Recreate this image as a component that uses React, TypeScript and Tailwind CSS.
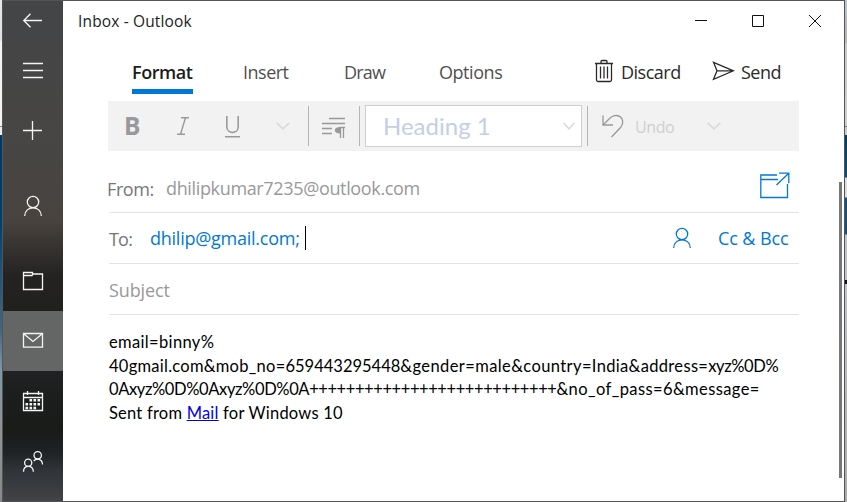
import type { ReactNode } from "react";

const ui = "font-['Open_Sans','Noto_Sans',sans-serif]";
const body = "font-['Lato','Open_Sans',sans-serif]";

function NavItem({ children, active = false, className = "" }: { children: ReactNode; active?: boolean; className?: string }) {
  return (
    <button className={`block h-[60px] w-[60px] shrink-0 ${active ? "bg-[#646665]" : ""} ${className}`}>
      <svg width="60" height="60" viewBox="0 0 60 60" fill="none" stroke="#f4f4f4" strokeWidth="1.3">
        {children}
      </svg>
    </button>
  );
}

function Chevron({ className, width = 14 }: { className: string; width?: number }) {
  return (
    <svg className={className} width={width} height="8" viewBox="0 0 14 8" preserveAspectRatio="none" fill="none" stroke="currentColor" strokeWidth="1.6">
      <path d="M.7.8 7 6.8 13.3.8" />
    </svg>
  );
}

function Sidebar() {
  return (
    <nav className="flex w-[60px] shrink-0 flex-col bg-[linear-gradient(180deg,#444547_0px,#474644_140px,#48433f_220px,#3a3633_240px,#242322_275px,#20201f_310px,#1f2122_371px,#191b19_430px,#1f2224_450px,#303338_470px,#424447_501px)]">
      <button className="h-[40px] w-[60px] shrink-0">
        <svg width="60" height="40" viewBox="0 0 60 40" fill="none" stroke="#f4f4f4" strokeWidth="1.4">
          <path d="M20.8 19.5H39M27.5 12.8 20.8 19.5l6.7 6.7" />
        </svg>
      </button>
      <NavItem><path d="M20 22.5h20M20 29.5h20M20 36.5h20" /></NavItem>
      <NavItem><path d="M20 29.5h19M29.5 20v19" /></NavItem>
      <NavItem className="mt-[15px]">
        <circle cx="30" cy="26" r="5.7" />
        <path d="M21.7 40c0-10.9 16.6-10.9 16.6 0" />
      </NavItem>
      <NavItem className="mt-[15px]">
        <path d="M20.5 21.5h9v1.5h10v15.5h-19zM20.5 24.5H29l1-1.5" />
      </NavItem>
      <NavItem active>
        <path d="M20.5 22.5h19v13.7h-19zM21 23l9 7.5 9-7.5" />
      </NavItem>
      <NavItem>
        <path d="M20.5 22.5h19v17h-19zM20.5 26.5h19M24.5 20v4M35.5 20v4" />
        <path fill="none" strokeWidth="2.6" d="M26.5 29.3h2.6M30.5 29.3h2.6M34.5 29.3h2.6M22.5 33.2h2.6M26.5 33.2h2.6M30.5 33.2h2.6M34.5 33.2h2.6M22.5 37h2.6M26.5 37h2.6M30.5 37h2.6" />
      </NavItem>
      <NavItem>
        <circle cx="34.7" cy="24.3" r="3.7" />
        <path d="M30.7 30.2c2-3 8.6-3.2 8.8 3.3" />
        <circle cx="25.2" cy="31.7" r="3.6" />
        <path d="M20.5 40.7c.2-7 9.4-7 9.9 0" />
      </NavItem>
    </nav>
  );
}

function TitleBar() {
  return (
    <header className="flex h-[40px] items-center justify-between">
      <h1 className={`${ui} ml-[15px] pt-[2px] text-[15.5px] tracking-[0.15px] text-[#222]`}>Inbox - Outlook</h1>
      <svg className="mr-[18px]" width="126" height="14" viewBox="0 0 126 14" fill="none" stroke="#111">
        <path d="M0 6.5h12M57.5 1.5h11v11h-11zM114 1l12 12M126 1l-12 12" />
      </svg>
    </header>
  );
}

function Tabs() {
  return (
    <div className={`${ui} flex h-[60px] text-[18px] leading-[28px] text-[#505050]`}>
      <div className="ml-[69px] mt-[17px] h-[36px] w-[61px] border-b-[5px] border-[#0078d7] font-semibold whitespace-nowrap tracking-[-0.45px] text-[#1c1c1c]">Format</div>
      <div className="ml-[50px] mt-[17px] w-[101px] tracking-[-0.5px]">Insert</div>
      <div className="mt-[17px] w-[95px] tracking-[-0.8px]">Draw</div>
      <div className="mt-[17px] w-[155px] tracking-[-0.45px]">Options</div>
      <div className="mt-[17px] flex w-[118px] text-[#2a2a2a]">
        <svg className="mt-px mr-[7px]" width="20" height="24" viewBox="0 0 20 24" fill="none" stroke="currentColor" strokeWidth="1.3">
          <path d="M1 4.5h18M7 4V2.5Q7 1.5 8 1.5h4q1 0 1 1V4M2.5 4.5V21q0 1.500 1.500 1.500h12q1.500 0 1.500-1.500V4.500M6.500 7.500v12M10 7.500v12M13.500 7.500v12" />
        </svg>
        <span className="tracking-[-0.5px]">Discard</span>
      </div>
      <div className="mt-[17px] flex text-[#2a2a2a]">
        <svg className="mt-[3px] mr-[6px]" width="23" height="20" viewBox="0 0 23 20" fill="none" stroke="currentColor" strokeWidth="1.3">
          <path d="M1.500 1.300 21.500 9.800 1.500 18.300 5 9.800zM5 9.800h16" />
        </svg>
        <span className="tracking-[-0.5px]">Send</span>
      </div>
    </div>
  );
}

function Toolbar() {
  return (
    <div className={`${ui} ml-[45px] flex h-[50px] w-[691px] items-center bg-[#f2f2f2] text-[#999]`}>
      <span className="ml-[16px] w-[52px] text-[24.5px] font-bold leading-none">B</span>
      <svg width="14" height="20" viewBox="0 0 14 20" fill="none" stroke="currentColor" strokeWidth="1.4">
        <path d="M5 1.700h8M1 18.300h8M9.500 1.700 4.500 18.300" />
      </svg>
      <svg className="ml-[35px]" width="15" height="24" viewBox="0 0 15 24" fill="none" stroke="currentColor" strokeWidth="1.600">
        <path d="M1.800 2v10.500c0 8 11.400 8 11.400 0V2M0 22.800h15" />
      </svg>
      <Chevron className="ml-[36px] text-[#dadada]" />
      <div className="ml-[18px] h-10 w-px bg-[#b4b4b4]" />
      <svg className="ml-[13px] mt-[3px]" width="24" height="22" viewBox="0 0 24 22" fill="none" stroke="currentColor" strokeWidth="1.300">
        <path d="M7 1.500h16M0 6.500h23M0 11.500h10M0 16.500h10" />
        <path d="M23 10.500h-5.500M18.500 10.500V21M21.500 10.500V21" />
        <path d="M18 10c-7 0-7 6.500 0 6.500z" fill="currentColor" stroke="none" />
      </svg>
      <div className="ml-[13px] h-10 w-px bg-[#b4b4b4]" />
      <div className={`${body} ml-[5px] flex h-[42px] w-[217px] items-center justify-between border border-[#cfcfcf] bg-white pr-[6px] pl-[17px]`}>
        <span className="text-[24px] tracking-[0px] text-[#c3cfe4]">Heading 1</span>
        <Chevron className="text-[#dadada]" width={12} />
      </div>
      <div className="ml-[5px] h-10 w-px bg-[#b4b4b4]" />
      <svg className="ml-[14px]" width="22" height="24" viewBox="0 0 22 24" fill="none" stroke="currentColor" strokeWidth="1.300">
        <path d="M1 1.500v9.500h10M1.300 10.700 7 5c7-8 18-1 12 8L9.500 23" />
      </svg>
      <span className="ml-[11px] w-[71px] pt-px text-[16px] tracking-[-0.4px] text-[#cfcfcf]">Undo</span>
      <Chevron className="ml-px text-[#dadada]" />
    </div>
  );
}

function Fields() {
  return (
    <div className={`${ui} ml-[45px] w-[691px] text-[18px] text-[#767676]`}>
      <div className="ml-px flex h-[62px] items-center border-b border-[#e3e3e3] pt-[13px]">
        <span className="-ml-[2px] w-[59px] pt-[2px] tracking-[-0.4px]">From:</span>
        <span className="whitespace-nowrap tracking-[-0.35px] text-[#999]">dhilipkumar7235@outlook.com</span>
        <svg className="mr-[9px] mb-[5px] ml-auto" width="30" height="27" viewBox="0 0 30 27" fill="none" stroke="#0078d7" strokeWidth="1.300">
          <path d="M17 3H.800v22.500H27.500V12M.800 7.500H18M19 1.200h9.800v10M28.500 1.500 16.500 13" />
        </svg>
      </div>
      <div className="ml-px flex h-[51px] items-center border-b border-[#e3e3e3]">
        <span className="w-[41px] pt-[2px] tracking-[-0.8px]">To:</span>
        <span className="w-[155px] tracking-[-0.25px] text-[#0078d7]">dhilip@gmail.com;</span>
        <i className="block h-6 w-px bg-black" />
        <svg className="ml-auto" width="20" height="22" viewBox="0 0 20 22" fill="none" stroke="#0078d7" strokeWidth="1.300">
          <circle cx="10" cy="7" r="5.700" />
          <path d="M1.700 21c0-10.900 16.600-10.900 16.600 0" />
        </svg>
        <span className="mr-[9px] ml-[26px] w-[72px] whitespace-nowrap tracking-[-0.1px] text-[#0078d7]">Cc &amp; Bcc</span>
      </div>
      <div className="ml-px flex h-[51px] items-center border-b border-[#e3e3e3] pt-[2px] tracking-[-0.1px] text-[#999]">Subject</div>
    </div>
  );
}

function Message() {
  return (
    <div className={`${body} ml-[46px] pt-[16px] text-[16.500px] leading-[23.600px] tracking-[0.22px] whitespace-nowrap text-black`}>
      <p className="tracking-[0.35px]">email=binny%</p>
      <p>
        <span className="tracking-[0.26px]">40gmail.com&amp;mob_no=</span>
        <span className="tracking-[0px]">659443295448</span>
        <span className="tracking-[0.4px]">&amp;gender=male&amp;country=</span>
        <span className="tracking-[0.33px]">India&amp;address=</span>
        <span className="tracking-[-0.4px]">xyz%0D%</span>
      </p>
      <p>
        <span className="tracking-[-0.38px]">0Axyz%0D%0Axyz%0D%0A</span>
        <span className="tracking-[-0.41px]">+++++++++++++++++++++++++++</span>
        <span className="tracking-[0.4px]">&amp;no_of_pass=6&amp;message=</span>
      </p>
      <p>Sent from <a className="text-[#0000ee] underline">Mail</a> for Windows 10</p>
    </div>
  );
}

export default function App() {
  return (
    <div className="flex h-[502px] w-[847px] overflow-hidden">
      <div className="w-[2px] bg-[linear-gradient(180deg,#e8e8e8_0px,#e0e0e0_40px,#f4f4f4_42px,#f4f4f4_126px,#888_126px,#888_127px,#eee_127px,#eee_135px,#003766_135px,#00406f_220px,#426681_330px,#8098a8_370px,#909294_430px,#888_502px)]" />
      <div className="flex w-[843px] border border-[#555]">
        <Sidebar />
        <main className="flex min-w-0 flex-1 bg-white">
          <div className="w-[776px]">
            <TitleBar />
            <Tabs />
            <Toolbar />
            <Fields />
            <Message />
          </div>
          <div className="mt-[181px] h-[296px] w-[3px] bg-[#777]" />
        </main>
      </div>
      <div className="w-[2px] bg-[linear-gradient(180deg,#bcc4cc_0px,#b6b6b6_42px,#c8c8c8_44px,#d0d0d0_126px,#777_126px,#777_127px,#ccc_127px,#ccc_135px,#003a63_135px,#0d4b78_177px,#ddd_178px,#ddd_197px,#174f78_198px,#174f78_234px,#c0c4c8_235px,#c0c4c8_280px,#111_280px,#111_284px,#bfc3c7_284px,#aaa_502px)]" />
    </div>
  );
}
